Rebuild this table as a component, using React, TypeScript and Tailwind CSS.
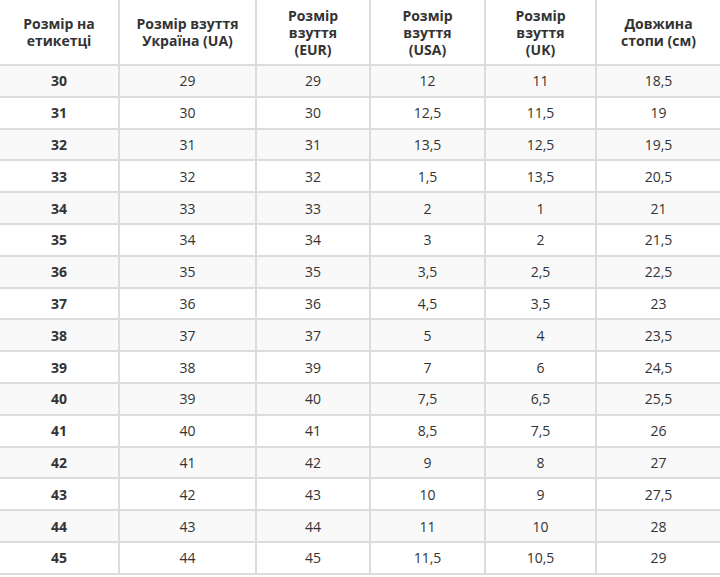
import React from "react";

const headers = [
  "Розмір на етикетці",
  "Розмір взуття Україна (UA)",
  "Розмір взуття (EUR)",
  "Розмір взуття (USA)",
  "Розмір взуття (UK)",
  "Довжина стопи (см)",
];

const rows: string[][] = [
  ["30", "29", "29", "12", "11", "18,5"],
  ["31", "30", "30", "12,5", "11,5", "19"],
  ["32", "31", "31", "13,5", "12,5", "19,5"],
  ["33", "32", "32", "1,5", "13,5", "20,5"],
  ["34", "33", "33", "2", "1", "21"],
  ["35", "34", "34", "3", "2", "21,5"],
  ["36", "35", "35", "3,5", "2,5", "22,5"],
  ["37", "36", "36", "4,5", "3,5", "23"],
  ["38", "37", "37", "5", "4", "23,5"],
  ["39", "38", "39", "7", "6", "24,5"],
  ["40", "39", "40", "7,5", "6,5", "25,5"],
  ["41", "40", "41", "8,5", "7,5", "26"],
  ["42", "41", "42", "9", "8", "27"],
  ["43", "42", "43", "10", "9", "27,5"],
  ["44", "43", "44", "11", "10", "28"],
  ["45", "44", "45", "11,5", "10,5", "29"],
];

// header cells get a narrower text box so lines wrap like the original
const headerPad = ["px-5", "px-4", "px-7", "px-8", "px-8", "px-3"];

export default function App() {
  return (
    <div className="w-[720px] h-[577px] overflow-hidden bg-white text-[14px] text-[#333] font-['Open_Sans',sans-serif]">
      <div className="grid grid-cols-[120px_137px_114px_115px_111px_123px]">
        {headers.map((h, i) => (
          <div
            key={h}
            className={`h-[66px] flex items-center justify-center text-center font-bold leading-[17px] border-b-2 border-[#dcdcdc] ${
              i < 5 ? "border-r-2" : ""
            } ${headerPad[i]}`}
          >
            {h}
          </div>
        ))}

        {rows.map((row, r) =>
          row.map((cell, c) => (
            <div
              key={`${r}-${c}`}
              className={`h-[31.8px] flex items-center justify-center border-b-2 border-[#dcdcdc] ${
                c < 5 ? "border-r-2" : ""
              } ${r % 2 === 0 ? "bg-[#f9f9f9]" : "bg-white"} ${
                c === 0 ? "font-bold" : ""
              }`}
            >
              {cell}
            </div>
          ))
        )}
      </div>
    </div>
  );
}
